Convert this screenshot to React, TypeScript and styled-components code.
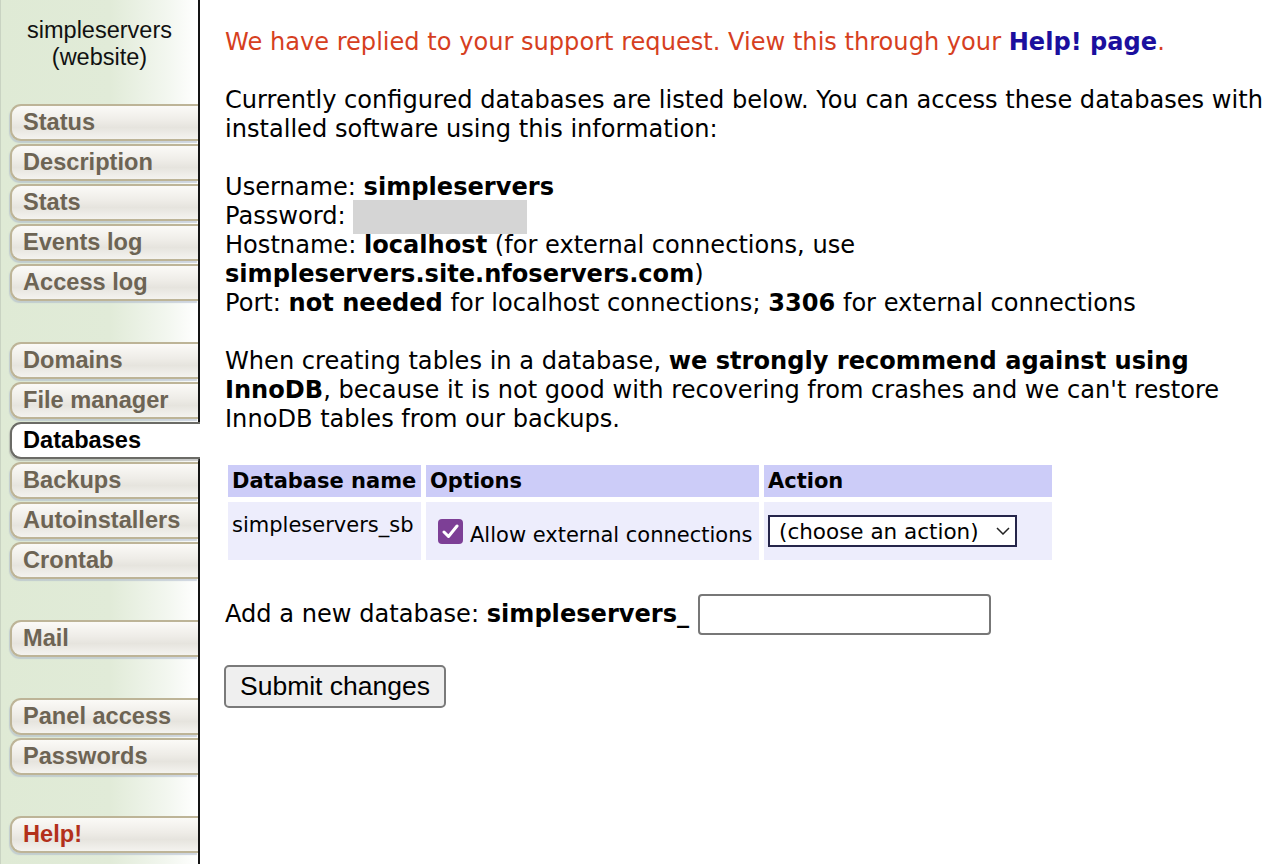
import React from "react";
import styled, { createGlobalStyle, css } from "styled-components";

const GlobalStyle = createGlobalStyle`
  html, body { margin: 0; padding: 0; background: #ffffff; }
  body { font-family: "DejaVu Sans", Verdana, sans-serif; color: #000; }
  * { box-sizing: border-box; }
`;

const Layout = styled.div`
  display: flex;
  min-height: 100vh;
`;

const Sidebar = styled.nav`
  width: 200px;
  flex: 0 0 200px;
  border-left: 1px solid #c9d3c2;
  border-right: 2px solid #141414;
  background: linear-gradient(to right, #dfead5 0%, #e1ebd8 55%, #f3f7f0 85%, #ffffff 100%);
  padding-top: 17px;
  display: flex;
  flex-direction: column;
`;

const SiteName = styled.div`
  font-family: "Liberation Sans", Arial, sans-serif;
  font-size: 23.5px;
  line-height: 27px;
  text-align: center;
  color: #111;
  margin-bottom: 33px;
`;

const TabGroup = styled.div`
  display: flex;
  flex-direction: column;
  margin-bottom: 38px;
`;

const Tab = styled.a<{ $active?: boolean; $help?: boolean }>`
  display: flex;
  align-items: center;
  height: 37px;
  margin: 0 0 3px 9px;
  padding-left: 11px;
  border: 2px solid #bdb497;
  border-right: none;
  border-radius: 11px 0 0 11px;
  background: linear-gradient(to bottom, #fbfaf7 0%, #eeece7 45%, #e6e4de 65%, #f4f3ef 100%);
  box-shadow: -1px 2px 1px rgba(170, 180, 200, 0.55);
  font-family: "Liberation Sans", Arial, sans-serif;
  font-weight: bold;
  font-size: 23.6px;
  color: #6d6454;
  text-decoration: none;
  cursor: pointer;
  ${(p) =>
    p.$help &&
    css`
      color: #b3301b;
    `}
  ${(p) =>
    p.$active &&
    css`
      background: #ffffff;
      border-color: #6b6b66;
      color: #000;
      margin-right: -2px;
      position: relative;
      z-index: 1;
      box-shadow: -1px 2px 1px rgba(150, 150, 150, 0.5);
    `}
`;

const Main = styled.main`
  flex: 1;
  padding: 28px 14px 40px 25px;
  font-size: 24.1px;
  line-height: 29px;
`;

const Para = styled.p`
  margin: 0 0 29px 0;
`;

const Notice = styled(Para)`
  color: #d63f1f;
`;

const HelpLink = styled.a`
  color: #1b0f9e;
  font-weight: bold;
  text-decoration: none;
`;

const Hidden = styled.span`
  display: inline-block;
  width: 174px;
  height: 34px;
  margin: -3px 0;
  vertical-align: middle;
  background: #d5d5d5;
`;

const DbTable = styled.table`
  border-collapse: separate;
  border-spacing: 5px;
  margin: -3px 0 29px -2px;
  font-size: 21px;
`;

const HeadCell = styled.th<{ $w: number }>`
  width: ${(p) => p.$w}px;
  height: 32px;
  padding: 0 4px;
  background: #ccccf8;
  text-align: left;
  font-weight: bold;
  vertical-align: middle;
`;

const Cell = styled.td<{ $top?: boolean }>`
  height: 58px;
  padding: 0 4px;
  background: #ededfc;
  vertical-align: ${(p) => (p.$top ? "top" : "middle")};
  ${(p) =>
    p.$top &&
    css`
      padding-top: 9px;
    `}
`;

const OptionLabel = styled.label`
  display: flex;
  align-items: flex-end;
  gap: 7px;
  padding-left: 8px;
  padding-top: 4px;
  white-space: nowrap;
`;

const CheckBox = styled.span`
  display: inline-flex;
  align-items: center;
  justify-content: center;
  width: 25px;
  height: 25px;
  border-radius: 4px;
  background: #7d3f96;
  margin-bottom: 3px;
`;

const OptionText = styled.span`
  line-height: 24px;
`;

const SelectWrap = styled.div`
  position: relative;
  width: 249px;
`;

const Select = styled.select`
  appearance: none;
  -webkit-appearance: none;
  width: 249px;
  height: 32px;
  padding: 0 0 0 9px;
  border: 2px solid #25254a;
  border-radius: 0;
  background: #ffffff;
  font-family: "DejaVu Sans", Verdana, sans-serif;
  font-size: 21.5px;
  color: #000;
`;

const Chevron = styled.svg`
  position: absolute;
  right: 7px;
  top: 12px;
  pointer-events: none;
`;

const AddRow = styled.div`
  display: flex;
  align-items: center;
  gap: 9px;
  margin-bottom: 30px;
`;

const TextInput = styled.input`
  width: 293px;
  height: 41px;
  border: 2px solid #777;
  border-radius: 4px;
  font-size: 20px;
  padding: 0 8px;
`;

const SubmitButton = styled.button`
  width: 222px;
  height: 43px;
  border: 2px solid #7a7a7a;
  border-radius: 5px;
  background: #efefef;
  font-family: "Liberation Sans", Arial, sans-serif;
  font-size: 26.5px;
  color: #000;
  padding: 0;
  margin-left: -1px;
`;

const groups: { label: string; active?: boolean; help?: boolean }[][] = [
  [{ label: "Status" }, { label: "Description" }, { label: "Stats" }, { label: "Events log" }, { label: "Access log" }],
  [
    { label: "Domains" },
    { label: "File manager" },
    { label: "Databases", active: true },
    { label: "Backups" },
    { label: "Autoinstallers" },
    { label: "Crontab" },
  ],
  [{ label: "Mail" }],
  [{ label: "Panel access" }, { label: "Passwords" }],
  [{ label: "Help!", help: true }],
];

export default function App() {
  return (
    <>
      <GlobalStyle />
      <Layout>
        <Sidebar>
          <SiteName>
            simpleservers
            <br />
            (website)
          </SiteName>
          {groups.map((g, i) => (
            <TabGroup key={i}>
              {g.map((t) => (
                <Tab key={t.label} $active={t.active} $help={t.help}>
                  {t.label}
                </Tab>
              ))}
            </TabGroup>
          ))}
        </Sidebar>
        <Main>
          <Notice>
            We have replied to your support request. View this through your <HelpLink>Help! page</HelpLink>.
          </Notice>
          <Para>
            Currently configured databases are listed below. You can access these databases with installed
            software using this information:
          </Para>
          <Para>
            Username: <b>simpleservers</b>
            <br />
            Password: <Hidden />
            <br />
            Hostname: <b>localhost</b> (for external connections, use
            <br />
            <b>simpleservers.site.nfoservers.com</b>)
            <br />
            Port: <b>not needed</b> for localhost connections; <b>3306</b> for external connections
          </Para>
          <Para>
            When creating tables in a database, <b>we strongly recommend against using InnoDB</b>, because it is
            not good with recovering from crashes and we can't restore InnoDB tables from our backups.
          </Para>
          <DbTable>
            <thead>
              <tr>
                <HeadCell $w={193}>Database name</HeadCell>
                <HeadCell $w={333}>Options</HeadCell>
                <HeadCell $w={288}>Action</HeadCell>
              </tr>
            </thead>
            <tbody>
              <tr>
                <Cell $top>simpleservers_sb</Cell>
                <Cell>
                  <OptionLabel>
                    <CheckBox>
                      <svg width="17" height="15" viewBox="0 0 17 15">
                        <path d="M2 8 L6.5 12.5 L15 2" fill="none" stroke="#fff" strokeWidth="3" strokeLinecap="round" strokeLinejoin="round" />
                      </svg>
                    </CheckBox>
                    <OptionText>Allow external connections</OptionText>
                  </OptionLabel>
                </Cell>
                <Cell>
                  <SelectWrap>
                    <Select defaultValue="">
                      <option value="">(choose an action)</option>
                    </Select>
                    <Chevron width="14" height="8" viewBox="0 0 14 8">
                      <path d="M1 1 L7 7 L13 1" fill="none" stroke="#222" strokeWidth="1.5" />
                    </Chevron>
                  </SelectWrap>
                </Cell>
              </tr>
            </tbody>
          </DbTable>
          <AddRow>
            <span>
              Add a new database: <b>simpleservers_</b>
            </span>
            <TextInput type="text" />
          </AddRow>
          <SubmitButton>Submit changes</SubmitButton>
        </Main>
      </Layout>
    </>
  );
}
